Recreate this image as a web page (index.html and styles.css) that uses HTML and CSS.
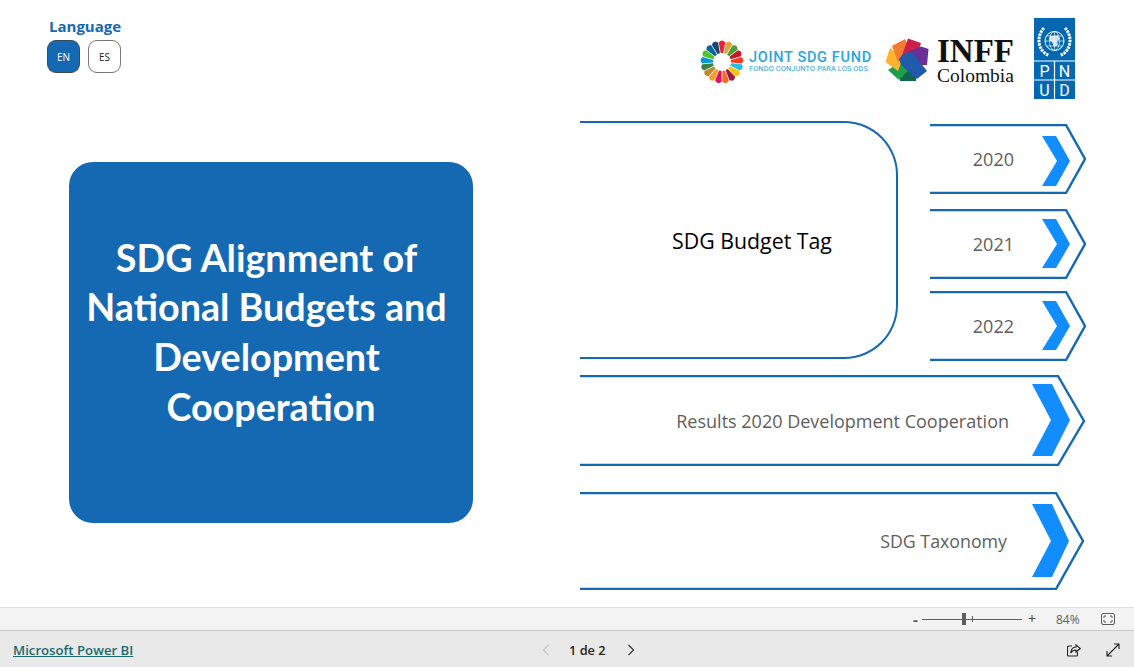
FILE: index.html
```html
<!DOCTYPE html>
<html lang="en">
<head>
<meta charset="utf-8">
<title>SDG Alignment of National Budgets and Development Cooperation</title>
<link rel="stylesheet" href="styles.css">
</head>
<body>
<main class="report">
  <section class="left">
    <div class="lang-title">Language</div>
    <div class="lang-buttons">
      <button class="lang lang-on">EN</button>
      <button class="lang">ES</button>
    </div>
    <div class="card">
      <div class="card-line shifted">SDG Alignment of</div>
      <div class="card-line shifted">National Budgets and</div>
      <div class="card-line shifted">Development</div>
      <div class="card-line">Cooperation</div>
    </div>
  </section>
  <section class="right">
    <header class="logos">
      <svg class="wheel" width="44" height="44" viewBox="-22 -22 44 44">
        <g id="petals">
          <path fill="#E5243B" transform="rotate(0)" d="M-1.3-9L1.3-9L3.300-19.500Q0-23.500-3.300-19.500Z"/>
          <path fill="#DDA63A" transform="rotate(21.18)" d="M-1.3-9L1.3-9L3.300-19.500Q0-23.500-3.300-19.500Z"/>
          <path fill="#4C9F38" transform="rotate(42.35)" d="M-1.3-9L1.3-9L3.300-19.500Q0-23.500-3.300-19.500Z"/>
          <path fill="#C5192D" transform="rotate(63.53)" d="M-1.3-9L1.3-9L3.300-19.500Q0-23.500-3.300-19.500Z"/>
          <path fill="#FF3A21" transform="rotate(84.71)" d="M-1.3-9L1.3-9L3.300-19.500Q0-23.500-3.300-19.500Z"/>
          <path fill="#26BDE2" transform="rotate(105.88)" d="M-1.3-9L1.3-9L3.300-19.500Q0-23.500-3.300-19.500Z"/>
          <path fill="#FCC30B" transform="rotate(127.06)" d="M-1.3-9L1.3-9L3.300-19.500Q0-23.500-3.300-19.500Z"/>
          <path fill="#A21942" transform="rotate(148.24)" d="M-1.3-9L1.3-9L3.300-19.500Q0-23.500-3.300-19.500Z"/>
          <path fill="#FD6925" transform="rotate(169.41)" d="M-1.3-9L1.3-9L3.300-19.500Q0-23.500-3.300-19.500Z"/>
          <path fill="#DD1367" transform="rotate(190.59)" d="M-1.3-9L1.3-9L3.300-19.500Q0-23.500-3.300-19.500Z"/>
          <path fill="#FD9D24" transform="rotate(211.76)" d="M-1.3-9L1.3-9L3.300-19.500Q0-23.500-3.300-19.500Z"/>
          <path fill="#BF8B2E" transform="rotate(232.94)" d="M-1.3-9L1.3-9L3.300-19.500Q0-23.500-3.300-19.500Z"/>
          <path fill="#3F7E44" transform="rotate(254.12)" d="M-1.3-9L1.3-9L3.300-19.500Q0-23.500-3.300-19.500Z"/>
          <path fill="#0A97D9" transform="rotate(275.29)" d="M-1.3-9L1.3-9L3.300-19.500Q0-23.500-3.300-19.500Z"/>
          <path fill="#56C02B" transform="rotate(296.47)" d="M-1.3-9L1.3-9L3.300-19.500Q0-23.500-3.300-19.500Z"/>
          <path fill="#00689D" transform="rotate(317.65)" d="M-1.3-9L1.3-9L3.300-19.500Q0-23.500-3.300-19.500Z"/>
          <path fill="#19486A" transform="rotate(338.82)" d="M-1.3-9L1.3-9L3.300-19.500Q0-23.500-3.300-19.500Z"/>
        </g>
      </svg>
      <div class="fund">
        <div class="fund-name">JOINT SDG FUND</div>
        <div class="fund-sub">FONDO CONJUNTO PARA LOS ODS</div>
      </div>
      <svg class="flower" width="44" height="44" viewBox="0 0 44 44">
        <polygon fill="#0F6650" points="15,43 31,43 31,28 15,28"/>
        <polygon fill="#1E9E4B" points="3,32 15,24 23,33 14,42"/>
        <polygon fill="#FBB42C" points="0.500,24 5,10 18,20 13,33"/>
        <polygon fill="#F47B30" points="7,8 20,1 26,14 13,24"/>
        <polygon fill="#CE2047" points="23,0.500 36,5 32,18 16,20"/>
        <polygon fill="#6C2F96" points="36,8.500 43.500,11 42,27 28,27 22,14"/>
        <polygon fill="#1F5BAA" points="14,21 19,15 27,14 42,33 32,41 16,27"/>
      </svg>
      <div class="inff">
        <div class="inff-name">INFF</div>
        <div class="inff-sub">Colombia</div>
      </div>
      <svg class="pnud" width="41" height="81" viewBox="0 0 41 81">
        <rect width="41" height="81" fill="#0468B1"/>
        <g fill="none" stroke="#fff">
          <circle cx="20.500" cy="23" r="9.500" stroke-width="1"/>
          <ellipse cx="20.500" cy="23" rx="5" ry="9.500" stroke-width=".6"/>
          <path stroke-width=".6" d="M11 23H30M12.500 18H28.500M12.500 28H28.500M20.500 13.500V32.500"/>
          <path stroke-width="3" stroke-dasharray="2.500 .8" d="M10 10C2 18 3.500 33 15 37.500M31 10C39 18 37.500 33 26 37.500"/>
        </g>
        <path fill="#fff" opacity=".8" d="M16 18L24 17.500L26 21L23 23L24 27L20 29L18 24L15 22Z"/>
        <path stroke="#fff" stroke-width="1.200" fill="none" d="M0 43H41M0 62H41M20.500 43V81"/>
        <g class="pnud-text">
          <text x="10.500" y="58.500">P</text>
          <text x="30.500" y="58.500">N</text>
          <text x="10.500" y="77.500">U</text>
          <text x="30.500" y="77.500">D</text>
        </g>
      </svg>
    </header>

    <div class="budget-row">
      <div class="tag">SDG Budget Tag</div>
      <div class="years">
        <div class="arrow year">
          <svg width="156" height="70" viewBox="0 0 156 70">
            <path class="outline" d="M0 1H136L155 35L136 69H0"/>
            <path class="chevron" d="M112 12H126L140 37L126 62H112L127 37Z"/>
          </svg>
          <span class="label year-label">2020</span>
        </div>
        <div class="arrow year year-2">
          <svg width="156" height="70" viewBox="0 0 156 70">
            <path class="outline" d="M0 1H136L155 35L136 69H0"/>
            <path class="chevron" d="M112 10H126L140 35L126 59H112L127 35Z"/>
          </svg>
          <span class="label year-label">2021</span>
        </div>
        <div class="arrow year year-3">
          <svg width="156" height="70" viewBox="0 0 156 70">
            <path class="outline" d="M0 1H136L155 35L136 69H0"/>
            <path class="chevron" d="M112 10H126L140 35L126 59H112L127 35Z"/>
          </svg>
          <span class="label year-label">2022</span>
        </div>
      </div>
    </div>

    <div class="arrow wide results">
      <svg width="506" height="91" viewBox="0 0 506 91">
        <path class="outline" d="M0 1H478L504 46L478 90H0"/>
        <path class="chevron" d="M452 9H472L490 45L472 81H452L471 45Z"/>
      </svg>
      <span class="label results-label">Results 2020 Development Cooperation</span>
    </div>
    <div class="arrow wide taxonomy">
      <svg width="506" height="98" viewBox="0 0 506 98">
        <path class="outline" d="M0 1H476L503 49L476 97H0"/>
        <path class="chevron" d="M452 12H472L489 49L472 85H452L471 49Z"/>
      </svg>
      <span class="label taxonomy-label">SDG Taxonomy</span>
    </div>
  </section>
</main>

<div class="zoombar">
  <span class="zoom-sign">-</span>
  <div class="slider"><span class="tick"></span><span class="thumb"></span></div>
  <span class="zoom-sign plus">+</span>
  <span class="zoom-value">84%</span>
  <svg class="fit" width="14" height="12" viewBox="0 0 14 12">
    <rect x=".5" y=".5" width="13" height="11" rx="1.500" fill="none" stroke="#605e5c"/>
    <path fill="none" stroke="#605e5c" d="M3 5V3H5M9 3H11V5M11 7V9H9M5 9H3V7"/>
  </svg>
</div>

<footer class="footer">
  <a class="pbi" href="#">Microsoft Power BI</a>
  <nav class="pager">
    <svg width="8" height="12" viewBox="0 0 8 12"><path fill="none" stroke="#c4c4c4" stroke-width="1.200" d="M6.500 1L1.500 6L6.500 11"/></svg>
    <span class="page-num">1 de 2</span>
    <svg width="8" height="12" viewBox="0 0 8 12"><path fill="none" stroke="#333" stroke-width="1.200" d="M1.500 1L6.500 6L1.500 11"/></svg>
  </nav>
  <div class="foot-icons">
    <svg width="14" height="13" viewBox="0 0 14 13"><path fill="none" stroke="#222" stroke-width="1.100" d="M5 2H1.500A1 1 0 0 0 .5 3V11A1 1 0 0 0 1.500 12H9.500A1 1 0 0 0 10.500 11V8"/><path fill="none" stroke="#222" stroke-width="1.100" d="M9 .8L13.300 4.500L9 8V6C6.500 6 4.800 7 3.800 9C3.800 5.500 6 3.300 9 3Z"/></svg>
    <svg width="14" height="14" viewBox="0 0 14 14"><path fill="none" stroke="#222" stroke-width="1.100" d="M8 1H13V6M13 1L1 13M1 8V13H6"/></svg>
  </div>
</footer>
</body>
</html>
```
FILE: styles.css
```css
* { box-sizing: border-box; }
html, body { margin: 0; padding: 0; }
body {
  width: 1134px;
  height: 667px;
  overflow: hidden;
  background: #fff;
  font-family: "Open Sans", "Noto Sans", sans-serif;
  color: #252423;
}
svg { display: block; }

.report { display: flex; height: 607px; }

/* left column */
.left { width: 580px; padding: 18px 0 0 47px; flex: none; }
.lang-title {
  margin-left: 2px;
  height: 22px;
  font-size: 15px;
  line-height: 17px;
  font-weight: 700;
  color: #1569b2;
}
.lang-buttons { display: flex; gap: 8px; }
.lang {
  width: 33px;
  height: 33px;
  padding: 0;
  border: 1px solid #777;
  border-radius: 9px;
  background: #fff;
  color: #252423;
  font: 10px "Open Sans", sans-serif;
}
.lang-on { background: #1569b2; border-color: #3b4a5a; color: #fff; }
.card {
  width: 404px;
  height: 361px;
  margin: 89px 0 0 22px;
  padding-bottom: 21px;
  display: flex;
  flex-direction: column;
  align-items: center;
  justify-content: center;
  border-radius: 24px;
  background: #1569b2;
  color: #fff;
  font-family: Lato, "Open Sans", sans-serif;
  font-weight: 700;
  font-size: 37.700px;
  line-height: 49.700px;
}
.card-line.shifted { padding-right: 9px; }

/* right column */
.right { flex: none; width: 554px; padding-top: 18px; }
.logos { display: flex; height: 82px; padding-right: 59px; justify-content: flex-end; align-items: flex-start; }
.wheel { margin-top: 22px; }
.fund { margin: 32px 0 0 5px; width: 123px; font-family: Roboto, sans-serif; }
.fund-name { color: #2aa6e0; font-size: 14.500px; line-height: 15px; font-weight: 500; letter-spacing: .68px; white-space: nowrap; }
.fund-sub { color: #2aa6e0; font-size: 7.400px; line-height: 8px; white-space: nowrap; letter-spacing: .1px; }
.flower { margin: 20px 0 0 13px; }
.inff { margin: 17px 0 0 8px; width: 77px; font-family: "Liberation Serif", serif; color: #111; white-space: nowrap; }
.inff-name { font-size: 33px; line-height: 32px; font-weight: 700; }
.inff-sub { font-size: 19.500px; line-height: 17px; }
.pnud { margin-left: 20px; }
.pnud-text { fill: #fff; font: 16px Roboto, sans-serif; text-anchor: middle; }

.budget-row { display: flex; height: 240px; margin-top: 21px; }
.tag {
  width: 318px;
  height: 238px;
  border: 2px solid #1569b2;
  border-left: 0;
  border-radius: 0 54px 54px 0;
  display: flex;
  align-items: center;
  justify-content: center;
  padding: 0 0 0 28px;
  color: #000;
  font-size: 21.300px;
}
.years { margin: 3px 0 0 32px; }
.arrow { display: grid; align-items: center; }
.arrow > * { grid-area: 1 / 1; }
.year-2 { margin-top: 15px; }
.year-3 { margin-top: 12px; }
.outline { fill: none; stroke: #1569b2; stroke-width: 2.400; stroke-linejoin: miter; }
.chevron { fill: #118dff; }
.label { justify-self: end; color: #605e5c; }
.year-label { font-size: 18px; padding-right: 72px; }
.results { margin-top: 14px; }
.results-label { font-size: 18px; padding-right: 77px; }
.taxonomy { margin-top: 26px; }
.taxonomy-label { font-size: 17.800px; padding-right: 79px; }
.wide { width: 506px; }

/* zoom bar */
.zoombar {
  display: flex;
  align-items: center;
  height: 24px;
  padding: 0 19px 0 913px;
  background: #f3f3f3;
  border-top: 1px solid #e1e1e1;
  border-bottom: 1px solid #c8c8c8;
  color: #605e5c;
  font-size: 12px;
}
.zoom-sign { width: 9px; font-size: 15px; font-weight: 700; line-height: 20px; }
.plus { margin-left: 6px; width: 12px; font-size: 14px; font-weight: 400; color: #444; }
.slider { position: relative; width: 100px; height: 1px; background: #605e5c; }
.thumb { position: absolute; left: 40px; top: -6px; width: 4px; height: 12px; background: #605e5c; }
.tick { position: absolute; left: 50px; top: -3px; width: 1px; height: 6px; background: #605e5c; }
.zoom-value { margin-left: 16px; width: 45px; }

/* footer */
.footer { display: flex; align-items: center; height: 36px; padding: 2px 14px 0 13px; background: #e9e9e9; }
.pbi { font-size: 13.200px; font-weight: 600; color: #1a6a72; text-decoration: underline; width: 120px; white-space: nowrap; }
.pager { display: flex; align-items: center; margin-left: 409px; }
.page-num { width: 38px; margin: 0 20px 0 19px; font-size: 12.800px; font-weight: 600; color: #252423; white-space: nowrap; }
.foot-icons { margin-left: auto; display: flex; gap: 25px; align-items: center; }
```
